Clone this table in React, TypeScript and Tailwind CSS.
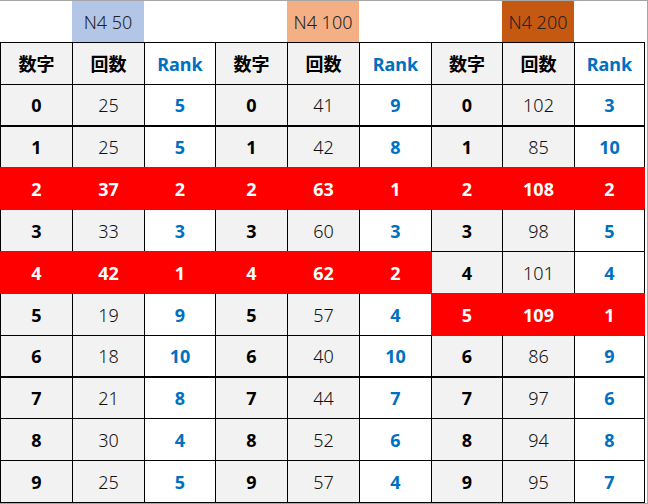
const colWidths = ["w-[72px]", "w-[72px]", "w-[71px]", "w-[72px]", "w-[72px]", "w-[72px]", "w-[71px]", "w-[72px]", "w-[71px]"];

// row heights include the top border
const rowHeights = ["h-[41px]", "h-[42px]", "h-[42px]", "h-[42px]", "h-[42px]", "h-[42px]", "h-[41px]", "h-[42px]", "h-[42px]", "h-[43px]"];
const thickRows = [1, 7];

const groups = [
  {
    label: "N4 50",
    labelBg: "bg-[#b4c6e7]",
    counts: [25, 25, 37, 33, 42, 19, 18, 21, 30, 25],
    ranks: [5, 5, 2, 3, 1, 9, 10, 8, 4, 5],
  },
  {
    label: "N4 100",
    labelBg: "bg-[#f4b084]",
    counts: [41, 42, 63, 60, 62, 57, 40, 44, 52, 57],
    ranks: [9, 8, 1, 3, 2, 4, 10, 7, 6, 4],
  },
  {
    label: "N4 200",
    labelBg: "bg-[#c65911]",
    counts: [102, 85, 108, 98, 101, 109, 86, 97, 94, 95],
    ranks: [3, 10, 2, 5, 4, 1, 9, 6, 8, 7],
  },
];

// which (row, group) pairs are highlighted red
const isRed = (row: number, col: number) => {
  const g = Math.floor(col / 3);
  if (row === 2) return true;
  if (row === 4 && g < 2) return true;
  if (row === 5 && g === 2) return true;
  return false;
};

function Cell({ row, col, text }: { row: number; col: number; text: string | number }) {
  const red = isRed(row, col);
  const kind = col % 3; // 0 数字, 1 回数, 2 Rank
  const topRed = red || (row > 0 && isRed(row - 1, col));
  const leftRed = red || (col > 0 && isRed(row, col - 1));
  const thick = thickRows.includes(row);

  const cls = [
    "box-border flex items-center justify-center border-l",
    thick ? "border-t-2" : "border-t",
    colWidths[col],
    rowHeights[row],
    topRed ? "border-t-[#ff0000]" : "border-t-black",
    leftRed ? "border-l-[#ff0000]" : "border-l-black",
    col === 8 ? (red ? "border-r border-r-[#ff0000]" : "border-r border-r-black") : "",
    row === 9 ? "border-b border-b-black" : "",
  ];

  if (red) {
    cls.push("bg-[#ff0000] font-bold text-white");
  } else if (kind === 0) {
    cls.push("bg-[#f2f2f2] font-bold text-black");
  } else if (kind === 1) {
    cls.push("bg-[#f2f2f2] font-light text-[#111]");
  } else {
    cls.push("bg-white font-bold text-[#0070c0]");
  }

  return <div className={cls.join(" ")}>{text}</div>;
}

export default function App() {
  return (
    <div
      className="box-border h-[504px] w-[648px] border-y border-r border-[#a6a6a6] bg-white text-[18px] leading-none"
      style={{ fontFamily: '"Noto Sans", "Noto Sans CJK JP", sans-serif' }}
    >
      {/* 上段ラベル */}
      <div className="flex h-[41px]">
        {colWidths.map((w, i) => {
          const g = groups[Math.floor(i / 3)];
          const isLabel = i % 3 === 1;
          return (
            <div
              key={i}
              className={`${w} flex items-center justify-center text-[18px] font-light text-[#222] ${isLabel ? g.labelBg : ""}`}
            >
              {isLabel ? g.label : ""}
            </div>
          );
        })}
      </div>

      {/* 見出し */}
      <div className="flex">
        {colWidths.map((w, i) => {
          const kind = i % 3;
          return (
            <div
              key={i}
              className={`box-border flex h-[42px] items-center justify-center border-l border-t border-black font-bold ${w} ${
                i === 8 ? "border-r" : ""
              } ${kind === 2 ? "bg-white text-[#0070c0]" : "bg-[#f2f2f2] text-black"}`}
            >
              {kind === 0 ? "数字" : kind === 1 ? "回数" : "Rank"}
            </div>
          );
        })}
      </div>

      {Array.from({ length: 10 }, (_, row) => (
        <div key={row} className="flex">
          {colWidths.map((_, col) => {
            const g = groups[Math.floor(col / 3)];
            const kind = col % 3;
            const text = kind === 0 ? row : kind === 1 ? g.counts[row] : g.ranks[row];
            return <Cell key={col} row={row} col={col} text={text} />;
          })}
        </div>
      ))}
    </div>
  );
}
